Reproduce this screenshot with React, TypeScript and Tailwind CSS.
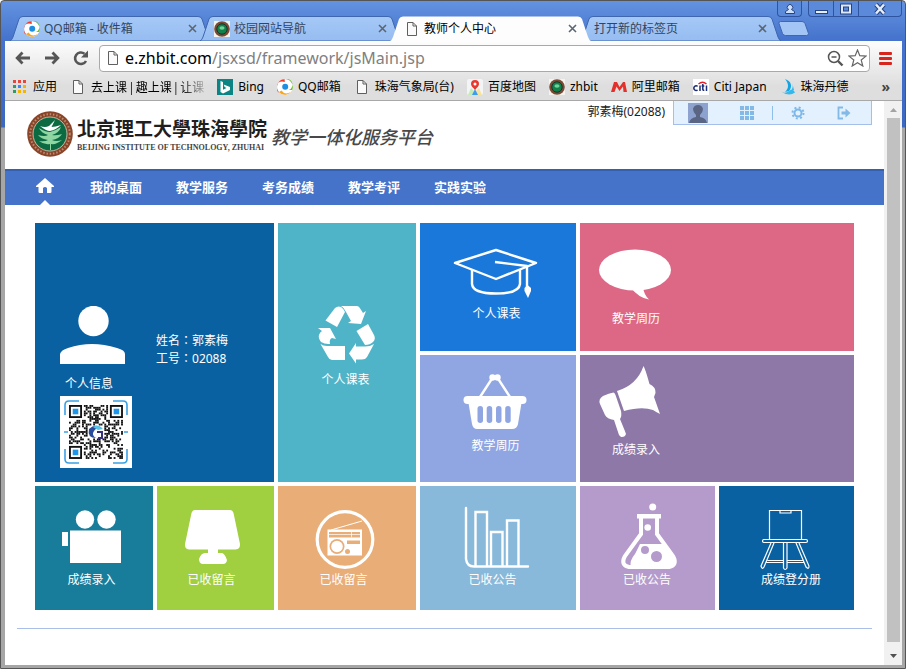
import type { ReactNode } from "react";

const FONT = "font-['Noto_Sans','Noto_Sans_CJK_SC',sans-serif]";

function PageIcon() {
  return (
    <svg width="16" height="16" viewBox="0 0 16 16" fill="#fafafa" stroke="#5f5f5f" aria-hidden="true">
      <path d="M3.5 1.5H9L12.5 5V14.5H3.5Z" />
      <path d="M9 1.5V5H12.5" fill="none" />
    </svg>
  );
}

function QQIcon() {
  return (
    <svg width="16" height="16" viewBox="0 0 16 16" aria-hidden="true">
      <circle cx="8" cy="8" r="7.8" fill="#fff" />
      <path d="M7 .2A7.800 7.800 0 0 1 15.200 11L12 11A5 5 0 0 0 7 .2Z" fill="#6cbf2c" />
      <path d="M15.400 10A7.800 7.800 0 0 1 2 13L4.500 11.500A6 6 0 0 0 15.400 10Z" fill="#f9a61a" />
      <path d="M2.600 13.800A7.800 7.800 0 0 1 7.600.2L7.800 3A5 5 0 0 0 2.600 13.800Z" fill="#ee3a24" />
      <circle cx="8.2" cy="7.800" r="3" fill="#1e8fe0" />
    </svg>
  );
}

function SealIcon() {
  return (
    <svg width="16" height="16" viewBox="0 0 16 16" aria-hidden="true">
      <rect width="16" height="16" fill="#f4f4ee" />
      <circle cx="8" cy="8" r="7.8" fill="#7a4a35" />
      <circle cx="8" cy="8" r="5.2" fill="#12804a" stroke="#14352a" />
      <ellipse cx="8" cy="7" rx="2.600" ry="1.800" fill="#6ed29a" />
    </svg>
  );
}

function AppsIcon() {
  const colors = ["#e8453c", "#e8453c", "#e8453c", "#2f9e5b", "#4285f4", "#f5b400", "#2f9e5b", "#f5b400", "#f5b400"];
  return (
    <svg width="16" height="16" viewBox="0 0 16 16" aria-hidden="true">
      {colors.map((c, i) => (
        <rect key={i} x={1 + (i % 3) * 5} y={1 + Math.floor(i / 3) * 5} width="3" height="3" fill={c} />
      ))}
    </svg>
  );
}

function BingIcon() {
  return (
    <svg width="16" height="16" viewBox="0 0 16 16" aria-hidden="true">
      <rect width="16" height="16" fill="#0c8484" />
      <path d="M3.5 2L6 3V10.8L9.5 9L7.6 8.1L6.6 5.6L13 8V11L6 14.6L3.5 13Z" fill="#fff" />
    </svg>
  );
}

function MapIcon() {
  return (
    <svg width="16" height="16" viewBox="0 0 16 16" aria-hidden="true">
      <rect width="16" height="16" rx="2" fill="#f3f4f5" />
      <path d="M1 16L4 9L7 12L6 16Z" fill="#c6ebb4" />
      <path d="M10 16L9 12L12 9L15 16Z" fill="#f9e29a" />
      <path d="M5 16L8 10L11 16Z" fill="#3b9cf0" />
      <path d="M8 11C5.500 8 4 7 4 5A4 4 0 0 1 12 5C12 7 10.500 8 8 11Z" fill="#e8392f" />
      <circle cx="8" cy="5" r="1.500" fill="#fff" />
    </svg>
  );
}

function AliIcon() {
  return (
    <svg width="16" height="16" viewBox="0 0 16 16" aria-hidden="true">
      <path d="M0 13L3 3H6L8.500 8L12 3H14L16 13H12.500L12 7.500L8.500 12L5.500 7.500L3.500 13Z" fill="#e2302b" />
    </svg>
  );
}

function CitiIcon() {
  return (
    <svg width="16" height="16" viewBox="0 0 16 16" aria-hidden="true">
      <rect width="16" height="16" fill="#fff" />
      <path d="M5.500 5Q9.500 1.500 13.500 5" fill="none" stroke="#e0202a" strokeWidth="1.300" />
      <path d="M4.600 7.300A2.300 2.300 0 1 0 4.600 11M7 6.500V12M9.800 5V10.500Q9.800 11.500 11.300 11.300M8.600 7H11.300M13.500 6.500V12" fill="none" stroke="#1c2d78" strokeWidth="1.500" />
    </svg>
  );
}

function FishIcon() {
  return (
    <svg width="16" height="16" viewBox="0 0 16 16" aria-hidden="true">
      <path d="M5 0C11 2 13 7 9 12L5 13C9 9 9 5 5 0Z" fill="#12a5e6" />
      <path d="M1 12.500Q5 15 9 12T15 13.500Q9 18 1 12.500Z" fill="#35b8ec" />
      <path d="M12.500 5Q13.500 9 10.500 12L14 11Z" fill="#35b8ec" />
    </svg>
  );
}

type TabProps = { title: string; icon?: ReactNode; active?: boolean };

function Tab({ title, icon, active = false }: TabProps) {
  return (
    <div className={`relative -mr-[11px] h-[25px] w-[201px] ${active ? "z-10" : ""}`}>
      <svg className="absolute inset-0" width="201" height="25" viewBox="0 0 201 25" aria-hidden="true">
        <defs>
          <linearGradient id="idleTab" x1="0" y1="0" x2="0" y2="1">
            <stop offset="0" stopColor="#a5c8f6" />
            <stop offset="1" stopColor="#96bcf1" />
          </linearGradient>
        </defs>
        <path
          d="M0 25Q2 24 3 21L9 3Q10 .5 13 .5H188Q191 .5 192 3L198 21Q199 24 201 25Z"
          fill={active ? "#fdfdfd" : "url(#idleTab)"}
          stroke={active ? "none" : "#3f66ae"}
        />
      </svg>
      <div className="relative flex h-full items-center gap-1 px-[14px]">
        {icon}
        <span className={`flex-1 truncate text-xs ${active ? "text-black" : "text-[#34445c]"}`}>{title}</span>
        <button type="button" aria-label={`关闭 ${title}`} className="flex size-[9px] items-center">
          <svg width="9" height="9" viewBox="0 0 9 9" stroke="#5c6673" strokeWidth="1.6" aria-hidden="true">
            <path d="M1 1L8 8M8 1L1 8" />
          </svg>
        </button>
      </div>
    </div>
  );
}

const winBtn = "flex h-4 items-center justify-center border border-t-0 border-[#2f549f] bg-[#5c8adb]";

function TitleBar() {
  return (
    <div>
      <div className="flex h-[15px] justify-end">
        <button type="button" aria-label="用户" className={`${winBtn} mr-1.5 w-[25px] rounded-b`}>
          <svg width="12" height="12" viewBox="0 0 12 12" fill="#cfe0fa" stroke="#27427c" aria-hidden="true">
            <path d="M1.500 10.500V8.500L4.500 6.500A2.700 2.700 0 1 1 7.500 6.500L10.500 8.500V10.500Z" />
          </svg>
        </button>
        <button type="button" aria-label="最小化" className={`${winBtn} w-[26px] rounded-bl`}>
          <svg width="13" height="12" viewBox="0 0 13 12" fill="#e4eefc" stroke="#27427c" aria-hidden="true">
            <rect x=".5" y="7.500" width="12" height="3" />
          </svg>
        </button>
        <button type="button" aria-label="最大化" className={`${winBtn} w-[25px] border-l-0`}>
          <svg width="12" height="12" viewBox="0 0 12 12" aria-hidden="true">
            <rect x="2" y="2.500" width="8" height="7" fill="none" stroke="#27427c" strokeWidth="4" />
            <rect x="2" y="2.500" width="8" height="7" fill="none" stroke="#dce8fb" strokeWidth="2" />
          </svg>
        </button>
        <button type="button" aria-label="关闭窗口" className={`${winBtn} w-[43px] rounded-br border-l-0`}>
          <svg width="14" height="12" viewBox="0 0 14 12" aria-hidden="true">
            <path d="M3 1.500L11 10.500M11 1.500L3 10.500" stroke="#27427c" strokeWidth="4.500" />
            <path d="M3 1.500L11 10.500M11 1.500L3 10.500" stroke="#e4eefc" strokeWidth="2.500" />
          </svg>
        </button>
      </div>
      <div className="flex h-[25px] items-center pl-[5px]">
        <Tab title="QQ邮箱 - 收件箱" icon={<QQIcon />} />
        <Tab title="校园网站导航" icon={<SealIcon />} />
        <Tab title="教师个人中心" icon={<PageIcon />} active />
        <Tab title="打开新的标签页" />
        <button type="button" aria-label="新标签页" className="ml-2 flex">
          <svg width="31" height="15" viewBox="0 0 31 15" fill="#a3c5f5" stroke="#3f66ae" aria-hidden="true">
            <path d="M2.500.5H24Q26 .5 27 2.500L30.500 12.500Q30.500 14.500 28.500 14.500H7.500Q5.500 14.500 4.500 12.500L1 2.500Q.5.5 2.500.5Z" />
          </svg>
        </button>
      </div>
    </div>
  );
}

function AddressBar() {
  return (
    <div className="flex h-[34px] items-center gap-3 px-2.5">
      <button type="button" aria-label="后退">
        <svg width="17" height="16" viewBox="0 0 17 16" fill="none" stroke="#565656" strokeWidth="2.800" aria-hidden="true">
          <path d="M7.500 2.500L2.200 8L7.500 13.500M2.500 8H15" />
        </svg>
      </button>
      <button type="button" aria-label="前进">
        <svg width="17" height="16" viewBox="0 0 17 16" fill="none" stroke="#565656" strokeWidth="2.800" aria-hidden="true">
          <path d="M8.500 2.500L13.800 8L8.500 13.500M13.500 8H1" />
        </svg>
      </button>
      <button type="button" aria-label="重新加载">
        <svg width="17" height="16" viewBox="0 0 17 16" aria-hidden="true">
          <path d="M13 11A5.800 5.800 0 1 1 11.500 3.700" fill="none" stroke="#565656" strokeWidth="2.600" />
          <path d="M15 .5V7.500H8Z" fill="#565656" />
        </svg>
      </button>
      <div className="-ml-[3px] flex h-[27px] flex-1 items-center rounded-sm border border-[#a9a9a9] bg-white pl-[5px] pr-0.5">
        <PageIcon />
        <a href="#" className="ml-1 flex-1 truncate text-base leading-6 text-[#808080]">
          <span className="text-black">e.zhbit.com</span>/jsxsd/framework/jsMain.jsp
        </a>
        <button type="button" aria-label="缩放" className="mr-1">
          <svg width="17" height="17" viewBox="0 0 17 17" fill="none" stroke="#555" aria-hidden="true">
            <circle cx="7" cy="7" r="5.500" strokeWidth="1.500" />
            <path d="M4.500 7H9.500" strokeWidth="1.500" />
            <path d="M11 11L15.500 15.500" strokeWidth="2.400" />
          </svg>
        </button>
        <button type="button" aria-label="加入书签">
          <svg width="19" height="18" viewBox="0 0 19 18" fill="#fff" stroke="#666" strokeWidth="1.200" aria-hidden="true">
            <path d="M9.500 1L11.800 6.700L18 7.100L13.200 11L14.800 17L9.500 13.700L4.200 17L5.800 11L1 7.100L7.200 6.700Z" />
          </svg>
        </button>
      </div>
      <button type="button" aria-label="菜单" className="-ml-[3px]">
        <svg width="13" height="14" viewBox="0 0 13 14" fill="#d9261c" aria-hidden="true">
          <rect width="13" height="3" y="1" rx="1" />
          <rect width="13" height="3" y="6" rx="1" />
          <rect width="13" height="3" y="11" rx="1" />
        </svg>
      </button>
    </div>
  );
}

const bookmarks: { label: string; icon: ReactNode; fade?: boolean }[] = [
  { label: "应用", icon: <AppsIcon /> },
  { label: "去上课 | 趣上课 | 让课", icon: <PageIcon />, fade: true },
  { label: "Bing", icon: <BingIcon /> },
  { label: "QQ邮箱", icon: <QQIcon /> },
  { label: "珠海气象局(台)", icon: <PageIcon /> },
  { label: "百度地图", icon: <MapIcon /> },
  { label: "zhbit", icon: <SealIcon /> },
  { label: "阿里邮箱", icon: <AliIcon /> },
  { label: "Citi Japan", icon: <CitiIcon /> },
  { label: "珠海丹德", icon: <FishIcon /> },
];

function BookmarkBar() {
  return (
    <div className="flex h-[26px] items-center gap-[13px] border-b border-[#a8a8a8] pb-0.5 pl-[7px] pr-3 text-xs text-black">
      {bookmarks.map((b) => (
        <a key={b.label} href="#" className="flex shrink-0 items-center gap-[5px]">
          {b.icon}
          <span
            className={
              b.fade
                ? "whitespace-nowrap font-['Noto_Sans_CJK_SC',sans-serif] [mask-image:linear-gradient(to_right,black_80%,#0003)]"
                : "whitespace-nowrap"
            }
          >
            {b.label}
          </span>
        </a>
      ))}
      <button type="button" className="ml-auto text-sm font-bold leading-4 text-[#444]">»</button>
    </div>
  );
}

function SchoolSeal() {
  return (
    <svg width="46" height="46" viewBox="0 0 46 46" aria-hidden="true">
      <circle cx="23" cy="23" r="22.800" fill="#8a4529" />
      <circle cx="23" cy="23" r="19.800" fill="none" stroke="#b98b74" strokeWidth="2" strokeDasharray="1.500 1.800" />
      <circle cx="23" cy="23" r="17" fill="#0b6a42" stroke="#dcd6c2" strokeWidth=".8" />
      <path d="M23 39V33Q17 34 12 30Q18 31 21 29Q14 28 11 24Q18 26 21 24Q14 22 12 17Q18 21 23 21Q28 20 34 16Q32 22 25 24Q29 25 35 23Q32 28 25 29Q29 31 35 29Q29 34 24 33V39Z" fill="#8fd6a3" />
      <path d="M13 15Q19 20 23 20Q29 19 34 14Q28 16 24.500 16L28 9L22 15Q18 17 13 15Z" fill="#fff" />
    </svg>
  );
}

function UserBar() {
  return (
    <div className="flex h-6 w-[199px] items-center gap-8 border border-t-0 border-[#a4bfec] bg-[#e3f1fe] pl-3.5">
      <button type="button" aria-label="头像">
        <svg width="20" height="20" viewBox="0 0 20 20" aria-hidden="true">
          <rect width="20" height="20" fill="#8ea2cf" />
          <path d="M1 20Q2 15 8 14V12Q5 9 5 6Q6 2 10 2T15 6Q15 9 12 12V14Q18 15 19 20Z" fill="#5a6483" />
        </svg>
      </button>
      <div className="flex items-center gap-[18px]">
        <button type="button" aria-label="应用">
          <svg width="14" height="14" viewBox="0 0 14 14" fill="#82b9e6" aria-hidden="true">
            {[0, 1, 2, 3, 4, 5, 6, 7, 8].map((i) => (
              <rect key={i} x={(i % 3) * 5} y={Math.floor(i / 3) * 5} width="4" height="4" />
            ))}
          </svg>
        </button>
        <span className="h-3.5 w-px bg-[#8dbfe8]" />
        <button type="button" aria-label="设置">
          <svg width="14" height="14" viewBox="0 0 14 14" fill="none" stroke="#7db8e8" aria-hidden="true">
            <circle cx="7" cy="7" r="3.500" strokeWidth="2" />
            <circle cx="7" cy="7" r="5.500" strokeWidth="2" strokeDasharray="2 2.320" />
          </svg>
        </button>
      </div>
      <button type="button" aria-label="退出">
        <svg width="14" height="14" viewBox="0 0 14 14" fill="none" stroke="#82b9e6" strokeWidth="1.800" aria-hidden="true">
          <path d="M6 1.500H1.500V12.500H6" />
          <path d="M4.500 7H9" strokeWidth="3" />
          <path d="M8.500 2.500L13.500 7L8.500 11.500Z" fill="#82b9e6" stroke="none" />
        </svg>
      </button>
    </div>
  );
}

function Header() {
  return (
    <header className="flex h-[68px] items-start">
      <div className="flex items-center gap-1 pl-[22px] pt-2.5">
        <SchoolSeal />
        <div className="text-[#1f1f1f]">
          <div className="whitespace-nowrap font-['Noto_Sans_CJK_TC',sans-serif] text-[19px] font-bold leading-7">北京理工大學珠海學院</div>
          <div className="whitespace-nowrap font-['Liberation_Serif',serif] text-[8px] font-bold leading-3 text-[#444]">
            BEIJING INSTITUTE OF TECHNOLOGY, ZHUHAI
          </div>
        </div>
        <h1 className="whitespace-nowrap pt-1.5 text-lg font-medium italic leading-6 text-[#484848]">教学一体化服务平台</h1>
      </div>
      <div className="ml-auto flex pr-3">
        <span className="whitespace-nowrap pr-2 text-xs leading-[22px] text-[#222]">郭素梅(02088)</span>
        <UserBar />
      </div>
    </header>
  );
}

function Nav() {
  return (
    <nav className="flex h-9 items-center gap-[34px] border-t-2 border-[#3560ae] bg-[#4473c9] pl-[29px] text-[13px] font-bold text-white">
      <a href="#" aria-label="首页" className="flex h-full w-[22px] flex-col items-center justify-between pt-[7px]">
        <svg width="18" height="15" viewBox="0 0 18 15" fill="#fff" aria-hidden="true">
          <path d="M9 0L18 8V9H15.500V14Q15.500 15 14 15H11V10Q9 8 7 10V15H4Q2.500 15 2.500 14V9H0V8Z" />
        </svg>
        <svg width="10" height="5" viewBox="0 0 10 5" fill="#fff" aria-hidden="true">
          <path d="M0 5L5 0L10 5Z" />
        </svg>
      </a>
      {["我的桌面", "教学服务", "考务成绩", "教学考评", "实践实验"].map((t) => (
        <a key={t} href="#" className="whitespace-nowrap">{t}</a>
      ))}
    </nav>
  );
}

function QrCode() {
  const n = 29;
  const cells: ReactNode[] = [];
  let seed = 7919;
  for (let y = 0; y < n; y++) {
    for (let x = 0; x < n; x++) {
      seed = (seed * 1103515245 + 12345) % 2147483648;
      const corner = (x < 8 && y < 8) || (x > 20 && y < 8) || (x < 8 && y > 20);
      const logo = Math.abs(x - 14) < 5 && Math.abs(y - 14) < 4;
      if (!corner && !logo && seed / 2147483648 > 0.5) {
        cells.push(<rect key={`${x}-${y}`} x={x} y={y} width="1" height="1" />);
      }
    }
  }
  return (
    <svg width="72" height="72" viewBox="0 0 72 72" role="img" aria-label="二维码">
      <rect width="72" height="72" fill="#fff" />
      <g transform="translate(9 9) scale(1.860)" fill="#111">
        {cells}
        {[[0, 0], [22, 0], [0, 22]].map(([x, y]) => (
          <g key={`${x}/${y}`}>
            <rect x={x + 0.5} y={y + 0.5} width="6" height="6" fill="#fff" stroke="#111" />
            <rect x={x + 2} y={y + 2} width="3" height="3" fill="#1d95e8" />
          </g>
        ))}
      </g>
      <path d="M5 19V9Q5 5 9 5H19M53 5H63Q67 5 67 9V19M67 53V63Q67 67 63 67H53M19 67H9Q5 67 5 63V53M4 36H8M64 36H68" fill="none" stroke="#3aa0e4" strokeWidth="1.600" />
      <path d="M29 33Q35 27 42 32Q37 31 34 35T36 42Q27 42 29 33Z" fill="#2a4c9c" />
      <path d="M33 31Q38 27 43 33L38 34Z" fill="#57c3e8" />
      <path d="M37 36H42V42H38" fill="none" stroke="#37307c" strokeWidth="2" />
    </svg>
  );
}

type TileProps = { label: string; box: string; place: string; wide?: boolean; children: ReactNode };

function Tile({ label, box, place, wide = false, children }: TileProps) {
  return (
    <a href="#" className={`flex flex-col text-xs leading-[18px] text-white ${place}`}>
      <span className={`flex flex-col items-center ${wide ? "w-20" : ""}`}>
        <svg className="h-[68px] w-20 overflow-visible" viewBox={box} fill="#fff" aria-hidden="true">
          {children}
        </svg>
        <span>{label}</span>
      </span>
    </a>
  );
}

function InfoLine({ name, value }: { name: string; value: string }) {
  return (
    <span className="block">
      {name}
      <span className="font-['Noto_Sans_CJK_TC',sans-serif] leading-none">：</span>
      {value}
    </span>
  );
}

function Dashboard() {
  return (
    <main className="mx-3 border-b border-[#a9bfe8] p-[18px]">
      <div className="grid grid-cols-[118fr_117fr_138fr_156fr_135fr_135fr] grid-rows-[128px_127px_124px] gap-1">
        <a href="#" className="col-span-2 row-span-2 flex gap-6 bg-[#0a61a1] pl-[25px] text-xs leading-[18px] text-white">
          <span className="flex flex-col pt-[83px]">
            <svg className="h-[69px] w-[66px]" viewBox="60 306 66 69" fill="#fff" aria-hidden="true">
              <circle cx="93.500" cy="321" r="15.200" />
              <path d="M60 364V354Q61 350 68 348Q80 344 92 344T117 348Q125 350 125 354V364Z" />
            </svg>
            <span className="pl-[5px]">个人信息</span>
            <span className="pt-[3px]"><QrCode /></span>
          </span>
          <span className="pt-[109px]">
            <InfoLine name="姓名" value="郭素梅" />
            <InfoLine name="工号" value="02088" />
          </span>
        </a>

        <Tile label="个人课表" box="306 303 80 68" place="row-span-2 bg-[#50b4c8] pt-20 pr-[3px]">
          <path d="M335 308Q338 305.500 341 307Q344 309 345 312L337 327L325.500 320.500Z" />
          <path d="M341 306H357Q359 306 360.500 309L363 313L366 311L361 324L348 323L351 321L346 312Q344 307.500 341 306Z" />
          <path d="M356.500 331L368 324L374 335Q376 339 373 342Q370 345 365 345Z" />
          <path d="M374 344L367 357Q365.500 359.500 362 359.500H356V363.500L349 353.500L356 343V346.500H365Q370 346.500 374 344Z" />
          <path d="M320.500 344Q323 346 327 346H345V360H332Q329.500 360 328 357Z" />
          <path d="M318 328L330 328L336 339L332 338Q329 339 330 344Q325 344.500 321 342Q318 338 319 335Q320 332 322 331Z" />
        </Tile>

        <Tile label="个人课表" box="457 237 80 68" place="bg-[#1b78db] pt-3.5 pr-[3px]">
          <g fill="none" stroke="#fff" strokeWidth="2.400" strokeLinejoin="round">
            <path d="M455 263L496 250L536 263L496 279Z" />
            <path d="M472 270V284Q473 293.500 496 293.500T520 284V270" />
            <path d="M495 262L527 266V288" />
          </g>
          <path d="M527.500 285L531 288V291L528 298L524.500 291V288Z" />
        </Tile>

        <Tile label="教学周历" box="596 242 80 68" wide place="col-span-2 bg-[#dc6885] pl-4 pt-[19px]">
          <ellipse cx="635" cy="270" rx="36" ry="20.500" />
          <path d="M631 288Q639 298 649 299.500Q644 295 643 287Z" />
        </Tile>

        <Tile label="教学周历" box="456 369 80 68" place="bg-[#90a6e3] pt-3.5 pr-[5px]">
          <path d="M480 397L493 377H497L510 397" fill="none" stroke="#fff" strokeWidth="2.400" />
          <circle cx="492.500" cy="377.500" r="3.200" />
          <circle cx="497.500" cy="377.500" r="3.200" />
          <rect x="463.500" y="396" width="63" height="8" rx="4" />
          <path d="M468.500 403H521.500L518 424Q517 429 512 429H477Q473 429 472 424Z" />
          <g fill="#90a6e3">
            <rect x="477.500" y="406" width="5.500" height="17" rx="2.700" />
            <rect x="486.700" y="406" width="5.500" height="17" rx="2.700" />
            <rect x="496" y="406" width="5.500" height="17" rx="2.700" />
            <rect x="505.200" y="406" width="5.500" height="17" rx="2.700" />
          </g>
        </Tile>

        <Tile label="成绩录入" box="596 373 80 68" wide place="col-span-2 bg-[#8d78a8] pl-4 pt-[18px]">
          <path d="M643.500 366Q645 368 649.500 384Q656 387 655.500 393L654 397L660 414Q656 412 653 410Q642 406 624 411L617 391Q637 385 643.500 366Z" />
          <path d="M603 396Q609 393 613.500 392.500Q615 393 615.500 395L621 411Q622 416 620 419L624.500 430L626 434Q625 437.500 621 437L619 435L614 420Q607 419 605 415L600 404Q598 399 603 396Z" />
        </Tile>

        <Tile label="成绩录入" box="52 503 80 68" place="bg-[#187c9b] pt-[17px] pr-[5px]">
          <circle cx="85" cy="519.500" r="9.200" />
          <circle cx="106.500" cy="519.500" r="9.200" />
          <rect x="70" y="530.500" width="51" height="32.500" />
          <rect x="62" y="532" width="6" height="14" />
        </Tile>

        <Tile label="已收留言" box="172 503 80 68" place="bg-[#a0cf40] pt-[17px] pr-2">
          <path d="M195 510H230Q232.500 510 233.500 513L240 544Q240.500 549 235.500 549.500H218V553H222Q225 554 227 560Q226.500 564 223 564H202Q199 563 199 559Q201 553 205 553H208V549.500H189Q184.500 549 185 544L191.500 513Q192.500 510 195 510Z" />
        </Tile>

        <Tile label="已收留言" box="304 503 80 68" place="bg-[#e9ad77] pt-[17px] pr-[7px]">
          <circle cx="345" cy="539.500" r="27.800" fill="none" stroke="#fff" strokeWidth="3.200" />
          <path d="M331 530L362 521" stroke="#fff" />
          <rect x="327.500" y="529.500" width="34.500" height="26" />
          <g fill="#e9ad77">
            <rect x="329" y="532" width="31" height="5.500" />
            <rect x="347" y="540.500" width="13" height="3.500" />
            <circle cx="347.500" cy="551.500" r="2.500" />
            <circle cx="337" cy="546.500" r="7.500" />
          </g>
          <path d="M329 534.500H360M351.500 532V537.500" stroke="#fff" strokeOpacity=".7" />
          <circle cx="337" cy="546.500" r="5.800" />
        </Tile>

        <Tile label="已收公告" box="454 503 80 68" place="bg-[#88b9da] pt-[17px] pr-[11px]">
          <g fill="none" stroke="#fff" strokeWidth="2.400">
            <path d="M467 508V559Q468 566.500 475 566.500H529" strokeLinecap="round" />
            <path d="M476.500 566V512H488V566M492 566V532H503.500V566M508 566V520.500H519.500V566" />
          </g>
        </Tile>

        <Tile label="已收公告" box="607 503 80 68" place="bg-[#b59bcc] pt-[17px] pr-px">
          <circle cx="652.700" cy="507" r="3.500" />
          <path d="M637 514H661V518.500H637Z" />
          <path d="M641 517V534L625 556Q620 565 629 567H669Q678 565 673 556L657 534V517" fill="none" stroke="#fff" strokeWidth="4" />
          <path d="M640 544H663L674 560Q675 567 669 567H631Q629 561 635 554Z" />
          <circle cx="647.700" cy="527.500" r="3.300" />
          <circle cx="645" cy="550" r="4" fill="#b59bcc" />
          <circle cx="656.500" cy="556.500" r="5.500" fill="#b59bcc" />
        </Tile>

        <Tile label="成绩登分册" box="751 503 80 68" place="bg-[#0a61a1] pl-[9px] pt-[17px]">
          <g fill="none" stroke="#fff" strokeWidth="1.200">
            <path d="M769.500 539V510.500H801.500V539M780 510.500V513H791V510.500" />
            <rect x="762.500" y="539.500" width="45" height="3" rx="1.500" />
            <path d="M771 543L761 566Q762 570 764 567L774 543M796 543L806 567Q809 570 809 566L799 543M783.500 543V568Q785 571 787 568V543M767.500 560.500H783.500M787 560.500H803M766.500 562.500H783.500M787 562.500H804" />
          </g>
        </Tile>
      </div>
    </main>
  );
}

function Scrollbar() {
  return (
    <div className="flex w-[18px] flex-col items-center justify-between bg-[#f1f1f1]">
      <svg width="17" height="17" viewBox="0 0 17 17" fill="#a3a3a3" aria-hidden="true">
        <path d="M5 11L8.500 7L12 11Z" />
      </svg>
      <div className="mb-1.5 w-[13px] flex-1 bg-[#c1c1c1]" />
      <svg width="17" height="17" viewBox="0 0 17 17" fill="#505050" aria-hidden="true">
        <path d="M5 6L8.500 10L12 6Z" />
      </svg>
    </div>
  );
}

export default function App() {
  return (
    <div className={`flex min-h-screen flex-col rounded-t border border-[#555] bg-[linear-gradient(#6393e0_0px,#4472cc_40px,#3c68c2_126px,#a6a6a6_127px)] pb-[3px] pl-1 pr-[3px] ${FONT}`}>
      <TitleBar />
      <div className="bg-[linear-gradient(#fdfdfd,#dedede_75%)]">
        <AddressBar />
        <BookmarkBar />
      </div>
      <div className="flex flex-1 bg-white">
        <div className="min-w-0 flex-1">
          <Header />
          <Nav />
          <Dashboard />
        </div>
        <Scrollbar />
      </div>
    </div>
  );
}
